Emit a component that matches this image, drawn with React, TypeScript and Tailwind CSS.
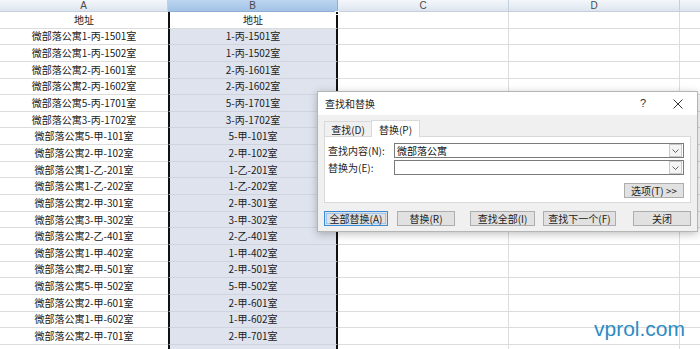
import React from 'react';

const rows: [string, string][] = [
  ['地址', '地址'],
  ['微部落公寓1-丙-1501室', '1-丙-1501室'],
  ['微部落公寓1-丙-1502室', '1-丙-1502室'],
  ['微部落公寓2-丙-1601室', '2-丙-1601室'],
  ['微部落公寓2-丙-1602室', '2-丙-1602室'],
  ['微部落公寓5-丙-1701室', '5-丙-1701室'],
  ['微部落公寓3-丙-1702室', '3-丙-1702室'],
  ['微部落公寓5-甲-101室', '5-甲-101室'],
  ['微部落公寓2-甲-102室', '2-甲-102室'],
  ['微部落公寓1-乙-201室', '1-乙-201室'],
  ['微部落公寓1-乙-202室', '1-乙-202室'],
  ['微部落公寓2-甲-301室', '2-甲-301室'],
  ['微部落公寓3-甲-302室', '3-甲-302室'],
  ['微部落公寓2-乙-401室', '2-乙-401室'],
  ['微部落公寓1-甲-402室', '1-甲-402室'],
  ['微部落公寓2-甲-501室', '2-甲-501室'],
  ['微部落公寓5-甲-502室', '5-甲-502室'],
  ['微部落公寓2-甲-601室', '2-甲-601室'],
  ['微部落公寓1-甲-602室', '1-甲-602室'],
  ['微部落公寓2-甲-701室', '2-甲-701室'],
  ['', ''],
];

const cjk = { fontFamily: '"Noto Sans CJK SC", "Noto Sans", sans-serif' };

const Chevron = () => (
  <div className="w-[13px] h-[13px] m-px border border-[#c8c8c8] bg-[#f4f4f4] flex items-center justify-center">
    <svg width="7" height="4" viewBox="0 0 7 4">
      <path d="M0.5 0.5 L3.5 3.5 L6.5 0.5" fill="none" stroke="#606060" strokeWidth="1" />
    </svg>
  </div>
);

const Btn: React.FC<{ label: string; w: string; focused?: boolean; className?: string }> = ({ label, w, focused, className }) => (
  <div
    className={`${w} ${className ?? ''} h-[15px] flex items-center justify-center text-[10px] leading-none text-[#222] bg-[#e1e1e1] border ${
      focused ? 'border-[#3c8cd8] shadow-[inset_0_0_0_1px_#e1e1e1,inset_0_0_0_2px_#9fc6ee]' : 'border-[#adadad]'
    }`}
  >
    {label}
  </div>
);

const FindReplaceDialog = () => (
  <div
    className="absolute left-[317px] top-[91px] w-[381px] h-[141px] bg-[#f0f0f0] border border-[#b5b5b5] shadow-[0_2px_8px_rgba(0,0,0,0.25)]"
    style={cjk}
  >
    <div className="h-[23px] bg-white flex items-center justify-between pl-[7px] pr-[14px]">
      <span className="text-[10px] text-[#222]">查找和替换</span>
      <div className="flex items-center gap-[27px]">
        <span className="text-[11px] text-[#333]" style={{ fontFamily: '"Liberation Sans", sans-serif' }}>?</span>
        <svg width="10" height="10" viewBox="0 0 10 10">
          <path d="M0.5 0.5 L9.5 9.5 M9.5 0.5 L0.5 9.5" stroke="#333" strokeWidth="1" />
        </svg>
      </div>
    </div>
    <div className="px-[6px] pt-[5px]">
      <div className="flex items-end h-[16px]">
        <div className="h-[15px] w-[48px] border border-b-0 border-[#d9d9d9] bg-[#f0f0f0] flex items-center justify-center text-[10px] text-[#222] mr-[-1px]">
          查找(D)
        </div>
        <div className="h-[17px] w-[49px] border border-b-0 border-[#d9d9d9] bg-white flex items-center justify-center text-[10px] text-[#222] relative z-10 mb-[-1px]">
          替换(P)
        </div>
      </div>
      <div className="h-[67px] w-[367px] bg-white border border-[#d9d9d9] px-[3px] pt-[6px]">
        <div className="flex items-center h-[15px]">
          <span className="w-[66px] text-[10px] text-[#222] leading-none">查找内容(N):</span>
          <div className="flex-1 h-[15px] border border-[#7a7a7a] flex items-center justify-between mr-[3px]">
            <span className="pl-[2px] text-[10px] text-[#111] leading-none">微部落公寓</span>
            <Chevron />
          </div>
        </div>
        <div className="flex items-center h-[15px] mt-[2px]">
          <span className="w-[66px] text-[10px] text-[#222] leading-none">替换为(E):</span>
          <div className="flex-1 h-[15px] border border-[#7a7a7a] flex items-center justify-end mr-[3px]">
            <Chevron />
          </div>
        </div>
        <div className="flex justify-end mt-[8px] mr-[3px]">
          <Btn label="选项(T) >>" w="w-[60px]" className="h-[14px]" />
        </div>
      </div>
      <div className="flex items-center mt-[8px]">
        <Btn label="全部替换(A)" w="w-[64px]" focused />
        <Btn label="替换(R)" w="w-[58px]" className="ml-[9px]" />
        <Btn label="查找全部(I)" w="w-[65px]" className="ml-[15px]" />
        <Btn label="查找下一个(F)" w="w-[73px]" className="ml-[8px]" />
        <Btn label="关闭" w="w-[58px]" className="ml-[17px]" />
      </div>
    </div>
  </div>
);

export default function App() {
  return (
    <div className="relative w-[700px] h-[349px] overflow-hidden bg-white" style={cjk}>
      {/* column headers */}
      <div className="flex h-[12px] text-[10px] leading-none text-[#4a4a4a]" style={{ fontFamily: '"Liberation Sans", sans-serif' }}>
        <div className="w-[168px] flex items-center justify-center bg-gradient-to-b from-[#f4f7fb] to-[#dde5ef] border-r border-b border-[#c5d0dd]">A</div>
        <div className="w-[170px] flex items-center justify-center bg-gradient-to-b from-[#bcd5f0] to-[#a2c2e6] border-r border-b border-[#8fb0d6]">B</div>
        <div className="w-[171px] flex items-center justify-center bg-gradient-to-b from-[#f4f7fb] to-[#dde5ef] border-r border-b border-[#c5d0dd]">C</div>
        <div className="w-[171px] flex items-center justify-center bg-gradient-to-b from-[#f4f7fb] to-[#dde5ef] border-r border-b border-[#c5d0dd]">D</div>
        <div className="flex-1 bg-gradient-to-b from-[#f4f7fb] to-[#dde5ef] border-b border-[#c5d0dd]" />
      </div>
      {/* cells */}
      <div className="flex flex-col">
        {rows.map(([a, b], i) => (
          <div key={i} className="flex h-[16.65px] text-[10px] text-[#202020] leading-none">
            <div className="w-[168px] flex items-center justify-center border-b border-[#dcdcdc]">{a}</div>
            <div
              className={`w-[170px] flex items-center justify-center border-x-2 border-x-[#111] border-b ${
                i === 0 ? 'bg-white border-b-[#dcdcdc]' : 'bg-[#dee3ed] border-b-[#cfd4de]'
              }`}
            >
              {b}
            </div>
            <div className="w-[171px] border-r border-b border-[#dcdcdc]" />
            <div className="w-[171px] border-r border-b border-[#dcdcdc]" />
            <div className="flex-1 border-b border-[#dcdcdc]" />
          </div>
        ))}
      </div>
      {/* fill handle */}
      <div className="absolute left-[335px] top-[11px] w-[4px] h-[4px] bg-[#111] border border-white" />
      <FindReplaceDialog />
      <div
        className="absolute left-[594px] top-[318px] text-[21px] leading-none text-[#2f8bc3]"
        style={{ fontFamily: '"Liberation Sans", Arial, sans-serif' }}
      >
        vprol.com
      </div>
    </div>
  );
}
